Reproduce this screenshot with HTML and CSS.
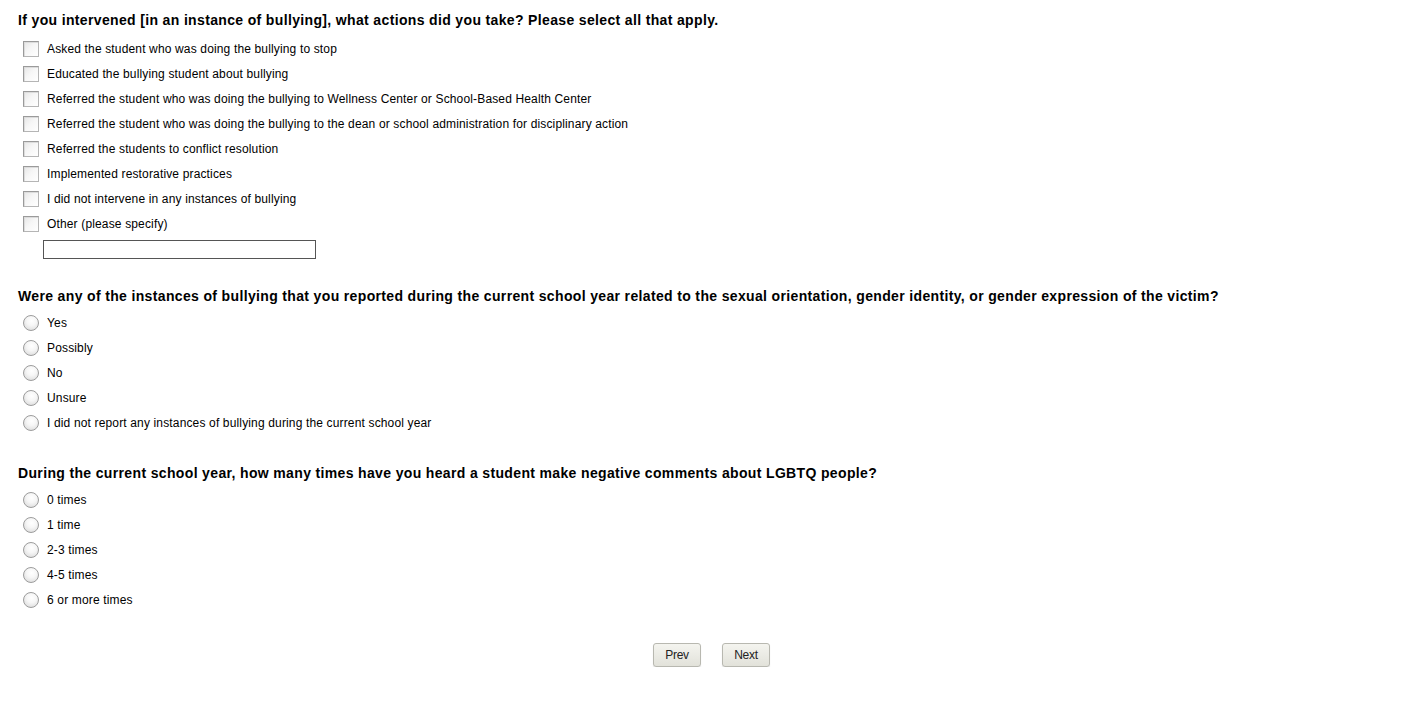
FILE: index.html
```html
<!DOCTYPE html>
<html>
<head>
<meta charset="utf-8">
<link rel="stylesheet" href="styles.css">
</head>
<body>
<form class="survey">
  <section class="question q-first">
    <h2 class="q-title">If you intervened [in an instance of bullying], what actions did you take? Please select all that apply.</h2>
    <ul class="options">
      <li class="opt"><span class="box check"></span><span class="label">Asked the student who was doing the bullying to stop</span></li>
      <li class="opt"><span class="box check"></span><span class="label">Educated the bullying student about bullying</span></li>
      <li class="opt"><span class="box check"></span><span class="label">Referred the student who was doing the bullying to Wellness Center or School-Based Health Center</span></li>
      <li class="opt"><span class="box check"></span><span class="label">Referred the student who was doing the bullying to the dean or school administration for disciplinary action</span></li>
      <li class="opt"><span class="box check"></span><span class="label">Referred the students to conflict resolution</span></li>
      <li class="opt"><span class="box check"></span><span class="label">Implemented restorative practices</span></li>
      <li class="opt"><span class="box check"></span><span class="label">I did not intervene in any instances of bullying</span></li>
      <li class="opt"><span class="box check"></span><span class="label">Other (please specify)</span></li>
    </ul>
    <div class="other"><span class="text-input"></span></div>
  </section>

  <section class="question q-second">
    <h2 class="q-title">Were any of the instances of bullying that you reported during the current school year related to the sexual orientation, gender identity, or gender expression of the victim?</h2>
    <ul class="options">
      <li class="opt"><span class="box radio"></span><span class="label">Yes</span></li>
      <li class="opt"><span class="box radio"></span><span class="label">Possibly</span></li>
      <li class="opt"><span class="box radio"></span><span class="label">No</span></li>
      <li class="opt"><span class="box radio"></span><span class="label">Unsure</span></li>
      <li class="opt"><span class="box radio"></span><span class="label">I did not report any instances of bullying during the current school year</span></li>
    </ul>
  </section>

  <section class="question q-third">
    <h2 class="q-title">During the current school year, how many times have you heard a student make negative comments about LGBTQ people?</h2>
    <ul class="options">
      <li class="opt"><span class="box radio"></span><span class="label">0 times</span></li>
      <li class="opt"><span class="box radio"></span><span class="label">1 time</span></li>
      <li class="opt"><span class="box radio"></span><span class="label">2-3 times</span></li>
      <li class="opt"><span class="box radio"></span><span class="label">4-5 times</span></li>
      <li class="opt"><span class="box radio"></span><span class="label">6 or more times</span></li>
    </ul>
  </section>

  <nav class="nav">
    <button type="button" class="btn">Prev</button>
    <button type="button" class="btn">Next</button>
  </nav>
</form>
</body>
</html>
```
FILE: styles.css
```css
html, body {
  margin: 0;
  padding: 0;
  background: #fff;
}
body {
  font-family: "Liberation Sans", Arial, sans-serif;
  color: #000;
}
.survey {
  padding: 11px 0 0 18px;
}
.question {
  margin: 0;
}
.q-title {
  margin: 0;
  font-size: 14px;
  font-weight: bold;
  line-height: 18px;
  letter-spacing: 0.35px;
  color: #000;
}
.options {
  list-style: none;
  margin: 5px 0 0 0;
  padding: 0;
}
.q-first .options {
  margin-top: 7px;
}
.opt {
  display: flex;
  align-items: center;
  height: 25px;
  padding-left: 5px;
}
.box {
  width: 16px;
  height: 16px;
  box-sizing: border-box;
  flex: none;
  margin-right: 8px;
}
.check {
  border: 1px solid #b5b5b5;
  border-top-color: #9a9a9a;
  border-left-color: #9a9a9a;
  background: linear-gradient(135deg, #e6e6e6 0%, #f6f6f6 45%, #ffffff 100%);
  box-shadow: inset 1px 1px 0 #dcdcdc;
}
.radio {
  border-radius: 50%;
  border: 1px solid #9c9c9c;
  background: radial-gradient(circle at 55% 35%, #ffffff 0%, #f6f6f6 40%, #d4d4d4 100%);
}
.label {
  font-size: 12px;
  line-height: 14px;
  letter-spacing: 0.15px;
}
.other {
  padding: 4px 0 0 25px;
}
.text-input {
  display: block;
  width: 273px;
  height: 19px;
  box-sizing: border-box;
  border: 1px solid #555;
  background: #fff;
}
.q-second {
  margin-top: 28px;
}
.q-third {
  margin-top: 29px;
}
.nav {
  display: flex;
  justify-content: center;
  gap: 21px;
  margin-top: 31px;
  padding-right: 15px;
}
.btn {
  width: 48px;
  height: 24px;
  padding: 0;
  font-family: "Liberation Sans", Arial, sans-serif;
  font-size: 12px;
  letter-spacing: -0.3px;
  color: #222;
  border: 1px solid #b8b8b0;
  border-radius: 3px;
  background: linear-gradient(#f4f4ef, #e2e2da);
  box-shadow: 0 1px 1px rgba(0,0,0,0.12);
}
```
